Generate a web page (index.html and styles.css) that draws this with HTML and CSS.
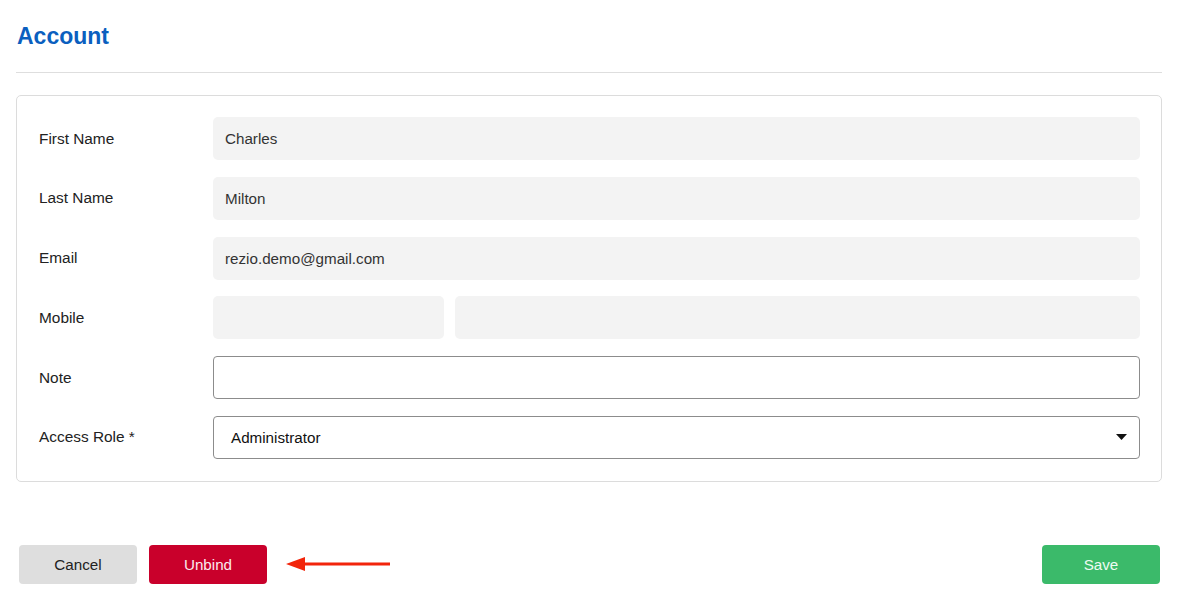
FILE: index.html
```html
<!DOCTYPE html>
<html>
<head>
<meta charset="utf-8">
<link rel="stylesheet" href="styles.css">
</head>
<body>
<div class="page">
  <h1 class="title">Account</h1>
  <div class="divider"></div>
  <div class="card">
    <div class="row">
      <div class="label">First Name</div>
      <div class="field filled">Charles</div>
    </div>
    <div class="row">
      <div class="label">Last Name</div>
      <div class="field filled">Milton</div>
    </div>
    <div class="row">
      <div class="label">Email</div>
      <div class="field filled">rezio.demo@gmail.com</div>
    </div>
    <div class="row">
      <div class="label">Mobile</div>
      <div class="mobile">
        <div class="field filled code"></div>
        <div class="field filled number"></div>
      </div>
    </div>
    <div class="row">
      <div class="label">Note</div>
      <div class="field outlined"></div>
    </div>
    <div class="row">
      <div class="label">Access Role *</div>
      <div class="field outlined select">
        <span>Administrator</span>
        <svg class="caret" width="11" height="6" viewBox="0 0 11 6"><path d="M0 0H11L5.5 6Z" fill="#111"/></svg>
      </div>
    </div>
  </div>
  <div class="footer">
    <div class="left">
      <button class="btn cancel">Cancel</button>
      <button class="btn unbind">Unbind</button>
      <svg class="arrow" width="104" height="16" viewBox="0 0 104 16">
        <path d="M0 8L19 1V15Z" fill="#f2250b"/>
        <rect x="17" y="6.5" width="87" height="3" fill="#f2250b"/>
      </svg>
    </div>
    <button class="btn save">Save</button>
  </div>
</div>
</body>
</html>
```
FILE: styles.css
```css
* { box-sizing: border-box; }
html, body { margin: 0; padding: 0; background: #fff; }
body { font-family: "Liberation Sans", Arial, sans-serif; color: #222; }
.page { padding: 0 22px 0 16px; }
.title {
  margin: 0;
  padding: 22px 0 22px 1px;
  font-size: 23px;
  line-height: 28px;
  font-weight: 700;
  color: #0b5fbf;
}
.divider { height: 1px; background: #dedede; }
.card {
  margin-top: 22px;
  border: 1px solid #dcdcdc;
  border-radius: 5px;
  padding: 21px 21px 22px;
  display: flex;
  flex-direction: column;
  gap: 16.8px;
}
.row { display: flex; align-items: center; }
.label {
  width: 175px;
  flex: none;
  font-size: 15.4px;
  color: #222;
  padding-left: 1px;
}
.field {
  flex: 1;
  height: 43px;
  border-radius: 5px;
  font-size: 15.2px;
  display: flex;
  align-items: center;
}
.filled { background: #f3f3f3; padding: 0 12px; color: #333; }
.outlined { background: #fff; border: 1px solid #8c8c8c; border-radius: 4px; padding: 0 17px; color: #111; }
.select { justify-content: space-between; padding-right: 12px; }
.mobile { flex: 1; display: flex; gap: 11px; }
.code { flex: none; width: 231px; }
.number { flex: 1; }
.footer {
  margin-top: 63px;
  display: flex;
  justify-content: space-between;
  align-items: center;
  padding: 0 2px 0 3px;
}
.left { display: flex; align-items: center; gap: 12px; }
.btn {
  width: 118px;
  height: 39px;
  border: none;
  border-radius: 4px;
  font-family: "Liberation Sans", Arial, sans-serif;
  font-size: 15.2px;
  padding: 1px 0 0;
}
.cancel { background: #dedede; color: #222; }
.unbind { background: #c9002b; color: #fbeaee; }
.save { background: #3bba6a; color: #eefaf2; }
.arrow { margin-left: 7px; }
```
